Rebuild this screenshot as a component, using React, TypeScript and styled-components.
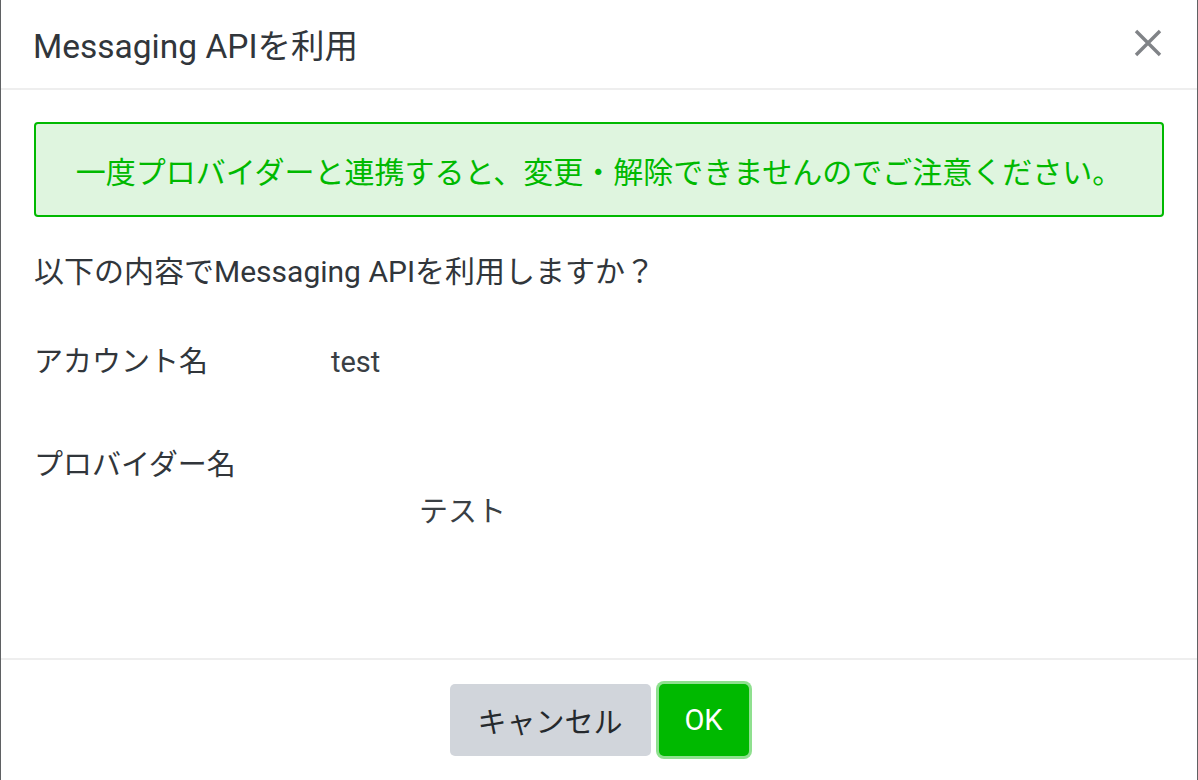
import styled, { createGlobalStyle } from "styled-components";

const GlobalStyle = createGlobalStyle`
  html, body {
    margin: 0;
    padding: 0;
    background: #5f6163;
  }
  * {
    box-sizing: border-box;
  }
`;

const FONT = `Roboto, "Noto Sans CJK JP", sans-serif`;

const Backdrop = styled.div`
  display: flex;
  justify-content: center;
  width: 1198px;
  height: 780px;
  padding: 0 1px;
  overflow: hidden;
  font-family: ${FONT};
`;

const Modal = styled.div`
  display: flex;
  flex-direction: column;
  width: 100%;
  background: #fff;
`;

const Header = styled.div`
  display: flex;
  align-items: center;
  justify-content: space-between;
  height: 90px;
  padding: 0 34px 2px 32px;
  border-bottom: 2px solid #eeeeee;
`;

const Title = styled.h5`
  margin: 0;
  font-size: 33.5px;
  font-weight: 400;
  color: #31363b;
`;

const CloseButton = styled.button`
  display: flex;
  align-items: center;
  justify-content: center;
  width: 40px;
  height: 40px;
  margin-right: -5px;
  padding: 0;
  border: none;
  background: none;
  cursor: pointer;
`;

const Body = styled.div`
  flex: 1;
  padding: 32px 33px 0 33px;
`;

const Alert = styled.div`
  display: flex;
  align-items: center;
  justify-content: center;
  height: 95px;
  border: 2px solid #00b900;
  border-radius: 4px;
  background: #dff5df;
  color: #00b900;
  font-size: 30px;
`;

const Text = styled.p`
  margin: 32px 0 0 0;
  font-size: 30px;
  line-height: 45px;
  color: #31363b;
`;

const Row = styled.div<{ $gap: number }>`
  display: flex;
  flex-wrap: wrap;
  margin: ${(p) => p.$gap}px 0 0 0;
  font-size: 29px;
  line-height: 45px;
  color: #31363b;
`;

const Label = styled.span`
  width: 297px;
`;

const Value = styled.span<{ $below?: boolean }>`
  color: #3a3f44;
  ${(p) =>
    p.$below &&
    `
    flex-basis: 100%;
    margin-top: 2px;
    padding-left: 385px;
  `}
`;

const Footer = styled.div`
  display: flex;
  justify-content: center;
  gap: 8px;
  height: 122px;
  padding-top: 24px;
  border-top: 2px solid #eeeeee;
`;

const Button = styled.button<{ $primary?: boolean }>`
  height: 72px;
  padding: 0;
  border: none;
  border-radius: 5px;
  font-family: ${FONT};
  font-size: 29px;
  cursor: pointer;
  background: ${(p) => (p.$primary ? "#00b900" : "#d1d5db")};
  color: ${(p) => (p.$primary ? "#ffffff" : "#25292d")};
  box-shadow: ${(p) => (p.$primary ? "0 0 0 3px #8fe08f" : "none")};
  width: ${(p) => (p.$primary ? "90px" : "201px")};
`;

const CloseIcon = () => (
  <svg width="30" height="30" viewBox="0 0 30 30">
    <path
      d="M3 3 L27 27 M27 3 L3 27"
      stroke="#808387"
      strokeWidth="3.4"
      strokeLinecap="butt"
      fill="none"
    />
  </svg>
);

export default function App() {
  return (
    <>
      <GlobalStyle />
      <Backdrop>
        <Modal>
          <Header>
            <Title>Messaging APIを利用</Title>
            <CloseButton aria-label="close">
              <CloseIcon />
            </CloseButton>
          </Header>
          <Body>
            <Alert>一度プロバイダーと連携すると、変更・解除できませんのでご注意ください。</Alert>
            <Text>以下の内容でMessaging APIを利用しますか？</Text>
            <Row $gap={46}>
              <Label>アカウント名</Label>
              <Value>test</Value>
            </Row>
            <Row $gap={58}>
              <Label>プロバイダー名</Label>
              <Value $below>テスト</Value>
            </Row>
          </Body>
          <Footer>
            <Button>キャンセル</Button>
            <Button $primary>OK</Button>
          </Footer>
        </Modal>
      </Backdrop>
    </>
  );
}
